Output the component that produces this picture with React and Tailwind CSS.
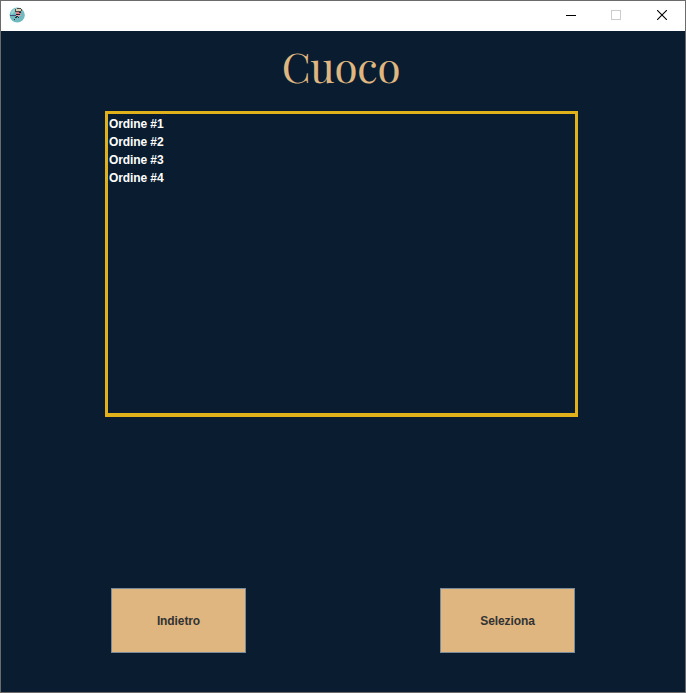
import React from 'react';

const orders = ['Ordine #1', 'Ordine #2', 'Ordine #3', 'Ordine #4'];

function AppIcon() {
  return (
    <svg width="16" height="16" viewBox="0 0 16 16">
      <circle cx="8.2" cy="8" r="7.6" fill="#6fb9bf" />
      <path d="M2 5Q4 1 8 1L5 6 2 8Z" fill="#91d2d4" />
      <path d="M7 2h5v2H7z" fill="#d9d2bd" />
      <path d="M6 2h1v2h5v1H6zM8 1h4v1H8zM12 2h1v2h-1z" fill="#53483f" />
      <path d="M7 5h5v2H7z" fill="#d87f91" />
      <path d="M10 5h2v1h-2zM7 7h4v1H7z" fill="#2c2028" />
      <path d="M6 8h6v1H6z" fill="#e0a0aa" />
      <path d="M1 8h6v1H1z" fill="#454c78" />
      <path d="M7 9h2v1H7zM6 10h2v1H6zM9 10h1v1H9zM5 12h1v1H5z" fill="#26333b" />
    </svg>
  );
}

function TitleBar() {
  return (
    <header className="flex h-[30px] shrink-0 justify-between bg-white">
      <div className="pt-[6px] pl-[8px]"><AppIcon /></div>
      <div className="flex">
        <button aria-label="Minimize" className="flex w-[46px] justify-center pt-[9px]">
          <svg width="10" height="10" shapeRendering="crispEdges"><path d="M0 5h10v1H0z" fill="#000" /></svg>
        </button>
        <button aria-label="Maximize" className="flex w-[44px] justify-center pt-[9px]">
          <svg width="10" height="10"><rect x=".5" y=".5" width="9" height="9" fill="none" stroke="#ccc" /></svg>
        </button>
        <button aria-label="Close" className="ml-px flex w-[46px] justify-center pt-[9px]">
          <svg width="10" height="10"><path d="M0 0L10 10M10 0L0 10" fill="none" stroke="#000" strokeWidth="1.1" /></svg>
        </button>
      </div>
    </header>
  );
}

function ActionButton({ children }) {
  return (
    <button className="h-[65px] w-[135px] border border-[#7a8a99] bg-[#dfb680] text-[12px] font-bold tracking-[-0.1px] text-[#333]">
      {children}
    </button>
  );
}

export default function App() {
  return (
    <div className="flex h-[693px] w-[686px] flex-col border border-[#6b6b6b] bg-[#0a1d30] font-['Liberation_Sans',Arial,sans-serif]">
      <TitleBar />
      <main className="flex flex-1 flex-col">
        <h1 className="h-[80px] pt-[7px] pr-[4px] text-center font-['Playfair_Display','Liberation_Serif',serif] text-[42px] leading-[56px] tracking-[-0.2px] text-[#dfb680]">
          Cuoco
        </h1>
        <ul className="ml-[104px] h-[306px] w-[473px] border-3 border-b-4 border-[#e0b11a] pt-px pl-px text-[12px] leading-[18px] font-bold tracking-[-0.1px] text-white">
          {orders.map((order) => <li key={order}>{order}</li>)}
        </ul>
        <div className="mt-[171px] flex justify-between pr-[110px] pl-[110px]">
          <ActionButton>Indietro</ActionButton>
          <ActionButton>Seleziona</ActionButton>
        </div>
      </main>
    </div>
  );
}
